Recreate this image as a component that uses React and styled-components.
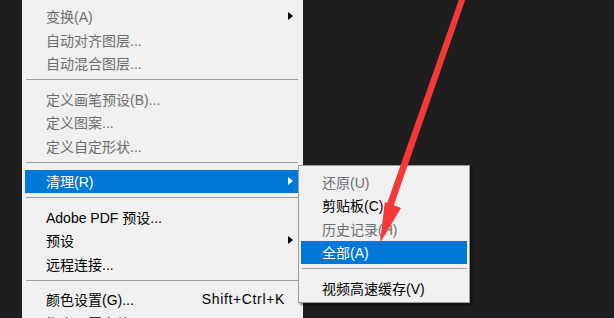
import React from "react";
import styled, { createGlobalStyle } from "styled-components";

const GlobalStyle = createGlobalStyle`
  html, body {
    margin: 0;
    padding: 0;
    background: #1e1e1e;
    overflow: hidden;
  }
  body {
    font-family: "Liberation Sans", "Noto Sans CJK SC", sans-serif;
  }
`;

const mainItems = [
  { type: "item", label: "变换(A)", disabled: true, sub: true },
  { type: "item", label: "自动对齐图层...", disabled: true },
  { type: "item", label: "自动混合图层...", disabled: true },
  { type: "sep" },
  { type: "item", label: "定义画笔预设(B)...", disabled: true },
  { type: "item", label: "定义图案...", disabled: true },
  { type: "item", label: "定义自定形状...", disabled: true },
  { type: "sep" },
  { type: "item", label: "清理(R)", active: true, sub: true },
  { type: "sep" },
  { type: "item", label: "Adobe PDF 预设..." },
  { type: "item", label: "预设", sub: true },
  { type: "item", label: "远程连接..." },
  { type: "sep" },
  { type: "item", label: "颜色设置(G)...", shortcut: "Shift+Ctrl+K" },
  { type: "item", label: "指定配置文件..." },
];

const subItems = [
  { type: "item", label: "还原(U)", disabled: true },
  { type: "item", label: "剪贴板(C)" },
  { type: "item", label: "历史记录(H)", disabled: true },
  { type: "item", label: "全部(A)", active: true },
  { type: "sep" },
  { type: "item", label: "视频高速缓存(V)" },
];

const MenuList = ({ items }) =>
  items.map((it, i) =>
    it.type === "sep" ? (
      <Separator key={i} />
    ) : (
      <Row key={i} $active={it.active} $disabled={it.disabled}>
        <span>{it.label}</span>
        {it.shortcut && <Shortcut>{it.shortcut}</Shortcut>}
        {it.sub && <SubArrow $active={it.active} />}
      </Row>
    )
  );

const App = () => (
  <>
    <GlobalStyle />
    <Screen>
      <MainMenu>
        <MenuList items={mainItems} />
      </MainMenu>
      <SubMenu>
        <MenuList items={subItems} />
      </SubMenu>
      <Pointer viewBox="0 0 614 318" width="614" height="318">
        <polygon
          points="459.5,-2 465.5,-1 393.8,205.2 401,208 380,243 384.8,202 387.2,203"
          fill="#f53838"
        />
      </Pointer>
    </Screen>
  </>
);

const Screen = styled.div`
  position: relative;
  width: 614px;
  height: 318px;
  overflow: hidden;
  padding-left: 22px;
  box-sizing: border-box;
  background: #1e1e1e;
`;

const MainMenu = styled.div`
  width: 281px;
  height: 100%;
  background: #f0f0f0;
  padding: 4.5px 5px 0 3px;
  box-sizing: border-box;
  display: flex;
  flex-direction: column;
`;

const SubMenu = styled.div`
  position: absolute;
  left: 298px;
  top: 165px;
  width: 172px;
  box-sizing: border-box;
  background: #f0f0f0;
  border: 1px solid #9c9c9c;
  padding: 4px 2px 2px 2px;
  display: flex;
  flex-direction: column;
  box-shadow: 2px 2px 2px rgba(0, 0, 0, 0.45);
`;

const Row = styled.div`
  position: relative;
  flex: none;
  height: 23.5px;
  padding: 0 13px 0 21px;
  display: flex;
  align-items: center;
  justify-content: space-between;
  font-size: 14px;
  white-space: nowrap;
  color: ${(p) => (p.$active ? "#ffffff" : p.$disabled ? "#6d6d6d" : "#000000")};
  background: ${(p) => (p.$active ? "#0078d7" : "transparent")};
`;

const Shortcut = styled.span`
  font-size: 14px;
  letter-spacing: 0.65px;
`;

const SubArrow = styled.span`
  position: absolute;
  right: 5px;
  top: 50%;
  margin-top: -4px;
  width: 0;
  height: 0;
  border-top: 4px solid transparent;
  border-bottom: 4px solid transparent;
  border-left: 5px solid ${(p) => (p.$active ? "#ffffff" : "#000000")};
`;

const Separator = styled.div`
  flex: none;
  height: 1px;
  margin: 4px 0 7px 1px;
  background: #a0a0a0;
`;

const Pointer = styled.svg`
  position: absolute;
  left: 0;
  top: 0;
  pointer-events: none;
`;

export default App;
